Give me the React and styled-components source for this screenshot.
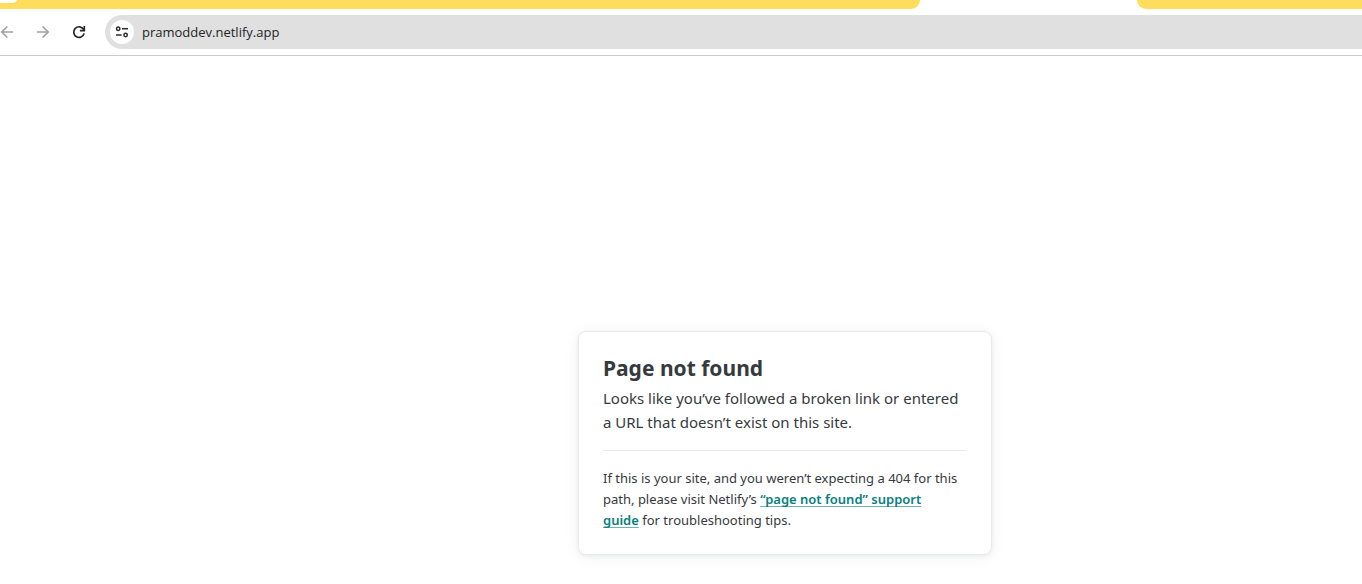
import React from "react";
import styled, { createGlobalStyle } from "styled-components";

const GlobalStyle = createGlobalStyle`
  *, *::before, *::after { box-sizing: border-box; }
  body {
    margin: 0;
    background: #ffffff;
    color: #363a3e;
    font-family: "Segoe UI", "Noto Sans", "Open Sans", sans-serif;
  }
`;

const TabStrip = styled.div`
  display: flex;
  height: 9px;
  overflow: hidden;
`;

const TabGroup = styled.div`
  flex: ${(p) => (p.$grow ? "1 1 0" : "0 0 225px")};
  background: #ffdd5c;
  border-radius: ${(p) => (p.$grow ? "0 0 13px 0" : "0 0 0 13px")};
`;

const TabEdge = styled.div`
  width: 17px;
  height: 3px;
  background: #ffffff;
  border-bottom-right-radius: 6px 3px;
`;

const ActiveTab = styled.div`
  flex: 0 0 217px;
`;

const Toolbar = styled.header`
  display: flex;
  align-items: center;
  padding: 6px 0;
  border-bottom: 1px solid #cacaca;
`;

const NavGroup = styled.nav`
  display: flex;
  gap: 22px;
  margin-right: 19px;
`;

const NavButton = styled.button`
  display: flex;
  padding: 0;
  border: 0;
  background: none;
  color: ${(p) => (p.disabled ? "#a2a2a2" : "#242629")};
`;

const AddressBar = styled.div`
  flex: 1;
  display: flex;
  align-items: center;
  gap: 8px;
  height: 34px;
  padding-left: 5px;
  background: #e0e0e0;
  border-radius: 17px 0 0 17px;
`;

const SiteInfo = styled.button`
  display: flex;
  align-items: center;
  justify-content: center;
  width: 24px;
  height: 24px;
  padding: 0;
  border: 0;
  border-radius: 50%;
  background: #ffffff;
  color: #2a2c2f;
`;

const AddressInput = styled.input`
  flex: 1;
  min-width: 0;
  height: 24px;
  padding: 0;
  border: 0;
  outline: 0;
  background: transparent;
  color: #222426;
  font: 400 13px/24px "Segoe UI", "Open Sans", "Noto Sans", sans-serif;
`;

const Main = styled.main`
  display: flex;
  justify-content: center;
  padding: 275px 0 29px 208px;
`;

const Card = styled.section`
  width: 414px;
  padding: 24px 24px 23px;
  border: 1px solid #e9ebeb;
  border-radius: 8px;
  background: #ffffff;
  box-shadow: 0 2px 16px rgba(14, 30, 37, 0.06), 0 1px 4px rgba(14, 30, 37, 0.06);
`;

const Title = styled.h1`
  margin: 0 0 6px;
  font-size: 21px;
  line-height: 24px;
  font-weight: 700;
`;

const Lead = styled.p`
  margin: 0;
  font-size: 15px;
  line-height: 24px;
`;

const Hint = styled.p`
  margin: 16px 0 0;
  padding-top: 17px;
  border-top: 1px solid #e9ebeb;
  font-size: 13px;
  line-height: 21px;
`;

const GuideLink = styled.a`
  color: #07807d;
  font-weight: 600;
  text-decoration: underline 1px #6db4b1;
  text-decoration-skip-ink: none;
  text-underline-offset: 2px;
`;

const ArrowIcon = ({ d }) => (
  <svg width="14" height="14" viewBox="0 0 14 14" fill="none" stroke="currentColor" strokeWidth="1.7" aria-hidden="true">
    <path d={d} />
  </svg>
);

const ReloadIcon = () => (
  <svg width="14" height="14" viewBox="0 0 14 14" fill="none" stroke="currentColor" strokeWidth="1.7" aria-hidden="true">
    <path d="M12.2 8.4A5.3 5.3 0 1 1 11.6 4.3L12.4 5.4" />
    <path d="M12.3 1v4.6H7.9" />
  </svg>
);

const TuneIcon = () => (
  <svg width="14" height="14" viewBox="0 0 14 14" fill="none" stroke="currentColor" strokeWidth="1.5" aria-hidden="true">
    <circle cx="3.2" cy="3.8" r="1.7" />
    <path d="M7 3.8h6M1 10h5.6" />
    <circle cx="10.6" cy="10" r="1.7" />
  </svg>
);

export default function App() {
  return (
    <>
      <GlobalStyle />
      <TabStrip>
        <TabGroup $grow>
          <TabEdge />
        </TabGroup>
        <ActiveTab />
        <TabGroup />
      </TabStrip>
      <Toolbar>
        <NavGroup aria-label="Browser navigation">
          <NavButton type="button" aria-label="Back" disabled>
            <ArrowIcon d="M13 7H2M7.3 1.5L1.8 7l5.5 5.5" />
          </NavButton>
          <NavButton type="button" aria-label="Forward" disabled>
            <ArrowIcon d="M1 7h11M6.7 1.5L12.2 7l-5.5 5.5" />
          </NavButton>
          <NavButton type="button" aria-label="Reload">
            <ReloadIcon />
          </NavButton>
        </NavGroup>
        <AddressBar>
          <SiteInfo type="button" aria-label="View site information">
            <TuneIcon />
          </SiteInfo>
          <AddressInput type="text" aria-label="Address" defaultValue="pramoddev.netlify.app" />
        </AddressBar>
      </Toolbar>
      <Main>
        <Card>
          <Title>Page not found</Title>
          <Lead>Looks like you’ve followed a broken link or entered a URL that doesn’t exist on this site.</Lead>
          <Hint>
            If this is your site, and you weren’t expecting a 404 for this path, please visit Netlify’s{" "}
            <GuideLink href="#support-guide">
              “page not found” support
              <br />
              guide
            </GuideLink>{" "}
            for troubleshooting tips.
          </Hint>
        </Card>
      </Main>
    </>
  );
}
